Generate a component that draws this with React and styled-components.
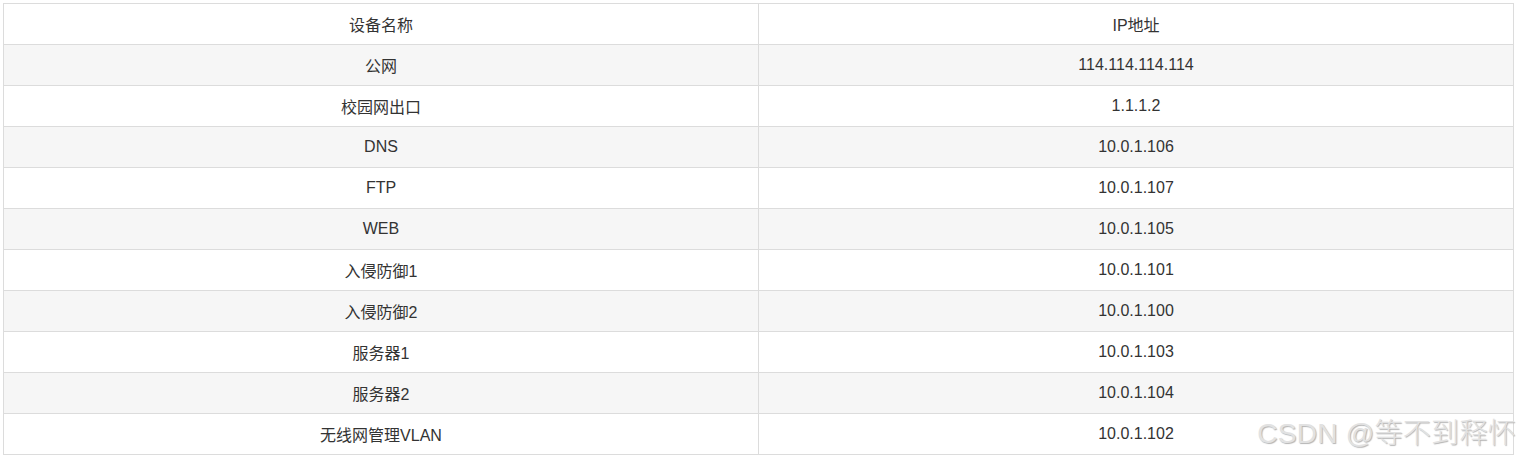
import styled, { createGlobalStyle } from "styled-components"

const GlobalStyle = createGlobalStyle`
    body {
        margin: 0;
        background: #fff;
        font-family: "Liberation Sans", "Noto Sans CJK SC", sans-serif;
    }
`;

const Page = styled.div`
    position: relative;
    padding: 3px 6px 0 3px;
    width: 1520px;
    box-sizing: border-box;
`;

const Table = styled.table`
    width: 100%;
    border-collapse: collapse;
    table-layout: fixed;
    font-size: 16px;
    color: #333;
`;

const Row = styled.tr`
    background-color: ${({ $striped }) => ($striped ? "#f6f6f6" : "#fff")};
`;

const Cell = styled.td`
    height: 41px;
    padding: 0 8px;
    border: 1px solid #dcdcdc;
    text-align: center;
    vertical-align: middle;
    box-sizing: border-box;
`;

const HeadCell = styled(Cell).attrs({ as: "th" })`
    font-weight: normal;
`;

const Watermark = styled.div`
    position: absolute;
    right: 4px;
    bottom: 4px;
    font-size: 28px;
    font-family: "Liberation Sans", "Noto Sans CJK SC", sans-serif;
    font-weight: 300;
    color: #e2e2e2;
    text-shadow: 1px 1px 1px #b4b4b4;
    letter-spacing: 0.3px;
    pointer-events: none;
    white-space: nowrap;
`;

const rows = [
    ["公网", "114.114.114.114"],
    ["校园网出口", "1.1.1.2"],
    ["DNS", "10.0.1.106"],
    ["FTP", "10.0.1.107"],
    ["WEB", "10.0.1.105"],
    ["入侵防御1", "10.0.1.101"],
    ["入侵防御2", "10.0.1.100"],
    ["服务器1", "10.0.1.103"],
    ["服务器2", "10.0.1.104"],
    ["无线网管理VLAN", "10.0.1.102"],
];

const App = () => {
    return (
        <>
            <GlobalStyle />
            <Page>
                <Table>
                    <thead>
                        <Row>
                            <HeadCell>设备名称</HeadCell>
                            <HeadCell>IP地址</HeadCell>
                        </Row>
                    </thead>
                    <tbody>
                        {rows.map(([name, ip], i) => (
                            <Row key={name} $striped={i % 2 === 0}>
                                <Cell>{name}</Cell>
                                <Cell>{ip}</Cell>
                            </Row>
                        ))}
                    </tbody>
                </Table>
                <Watermark>CSDN @等不到释怀</Watermark>
            </Page>
        </>
    )
}

export default App
